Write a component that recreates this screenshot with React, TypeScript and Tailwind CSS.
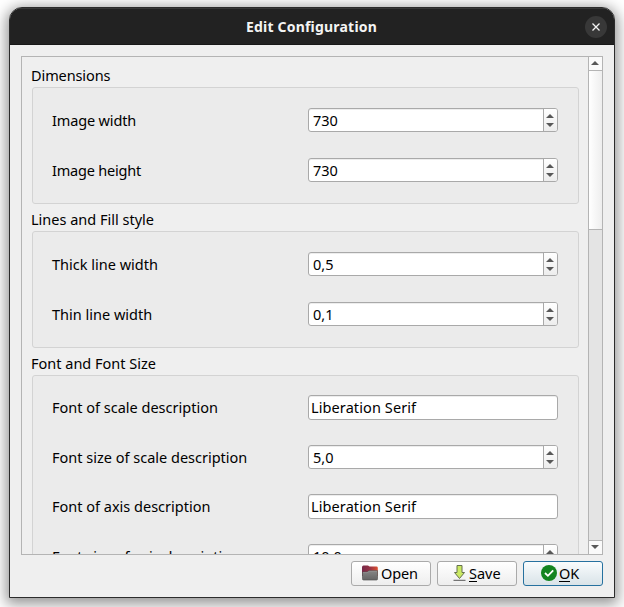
import type { ReactNode } from "react";

function Arrow({ down = false }: { down?: boolean }) {
  return (
    <svg width="8" height="4" viewBox="0 0 8 4" className={down ? "block rotate-180" : "block"}>
      <path d="M4 0 L8 4 H0 Z" fill="#585858" />
    </svg>
  );
}

function Spin({ value }: { value: string }) {
  return (
    <div className="flex h-6 w-[250px] overflow-hidden rounded-[3px] border border-[#a9a9a9] bg-white shadow-[inset_0_1px_0_#ededed]">
      <div className="flex h-[22px] flex-1 items-center pl-[4px]">{value}</div>
      <div className="flex w-[14px] flex-col items-center gap-[5px] border-l border-[#a9a9a9] bg-linear-to-b from-white to-[#ededed] pr-px pt-[5px]">
        <Arrow />
        <Arrow down />
      </div>
    </div>
  );
}

function Field({ value }: { value: string }) {
  return (
    <div className="flex h-[25px] w-[250px] items-center rounded-[3px] border border-[#a9a9a9] bg-white pb-px pl-[2px] tracking-[0.1px] shadow-[inset_0_1px_0_#ededed]">
      {value}
    </div>
  );
}

function Row({ label, children }: { label: ReactNode; children: ReactNode }) {
  return (
    <div className="flex items-center">
      <div className="w-[256px] whitespace-nowrap pb-px">{label}</div>
      {children}
    </div>
  );
}

function Group({ title, className, children }: { title: ReactNode; className: string; children: ReactNode }) {
  return (
    <section>
      <h2 className="flex h-[27px] items-center pl-[9px] pt-[3px]">{title}</h2>
      <div className={`ml-[10px] flex w-[547px] flex-col rounded-[3px] border border-[#d3d3d3] bg-[#ebebeb] pl-[19px] ${className}`}>
        {children}
      </div>
    </section>
  );
}

function FolderIcon() {
  return (
    <svg width="16" height="16" viewBox="0 0 16 16">
      <defs>
        <linearGradient id="folderBack" x1="0" x2="1">
          <stop offset="0" stopColor="#762949" />
          <stop offset=".5" stopColor="#963043" />
          <stop offset="1" stopColor="#dc5131" />
        </linearGradient>
        <linearGradient id="folderFront" x1="0" x2="0" y1="0" y2="1">
          <stop offset="0" stopColor="#858585" />
          <stop offset="1" stopColor="#666" />
        </linearGradient>
      </defs>
      <path d="M0 2.2Q0 .4 1.5.4H6L7.5 1.4H14.4Q15.8 1.4 15.8 2.8V11H0Z" fill="url(#folderBack)" />
      <path d="M.4 7.8Q.4 7 1.4 7H5L7 5.7H15.6V13.8Q15.6 15 14.4 15H1.6Q.4 15 .4 13.8Z" fill="url(#folderFront)" stroke="#555" strokeWidth=".7" />
      <path d="M1 7.6H5.3L7.2 6.3H15" fill="none" stroke="#a0a0a0" strokeWidth=".6" />
    </svg>
  );
}

function SaveIcon() {
  return (
    <svg width="13" height="16" viewBox="0 0 13 16">
      <path d="M4 .5H9V7.5H11.5L6.5 13.5 1.5 7.5H4Z" fill="#cbea63" stroke="#66704f" strokeWidth="1" />
      <path d="M.5 15.3H12.5" stroke="#555" strokeWidth="1" />
    </svg>
  );
}

function OkIcon() {
  return (
    <svg width="16" height="16" viewBox="0 0 16 16">
      <circle cx="8" cy="8" r="8" fill="#138420" />
      <path d="M4 8L6.9 10.8 12.2 5.3" fill="none" stroke="#fff" strokeWidth="1.8" />
    </svg>
  );
}

function Mnemonic({ letter, rest }: { letter: string; rest: string }) {
  return (
    <span className="flex">
      <span className="relative after:absolute after:inset-x-0 after:bottom-[1px] after:h-px after:bg-black">{letter}</span>
      {rest}
    </span>
  );
}

export default function App() {
  return (
    <div className="h-[607px] w-[624px] overflow-hidden bg-white pl-[9px] pt-[7px] font-['Noto_Sans',sans-serif] text-[14.5px] leading-5 text-black">
      <div className="flex h-[591px] w-[606px] flex-col overflow-hidden rounded-t-[13px] border border-[#2c2c2c] bg-[#efefef] shadow-[0_3px_14px_3px_rgba(0,0,0,0.42)]">
        <header className="flex h-[37px] shrink-0 items-center border-b border-[#181818] bg-[#222] pl-[28px] pr-[7px] shadow-[inset_0_1px_0_#383838]">
          <h1 className="flex-1 pt-[2px] text-center text-[14px] font-bold tracking-[0.2px] text-[#f4f4f4]">Edit Configuration</h1>
          <button className="mt-px flex size-[22px] items-center justify-center rounded-full bg-[#383838]">
            <svg width="8" height="8" viewBox="0 0 8 8">
              <path d="M.5.5L7.5 7.5M7.5.5L.5 7.5" stroke="#f4f4f4" strokeWidth="1.3" />
            </svg>
          </button>
        </header>

        <main className="ml-[11px] mt-[11px] flex h-[499px] w-[582px] shrink-0 border border-[#b4b4b4]">
          <div className="flex h-[497px] flex-1 flex-col overflow-hidden pt-[3px]">
            <Group title={<span className="tracking-[-0.1px]">Dimensions</span>} className="h-[117px] shrink-0 gap-[26px] pt-[20px]">
              <Row label={<span className="tracking-[-0.15px]">Image width</span>}><Spin value="730" /></Row>
              <Row label={<span className="tracking-[-0.2px]">Image height</span>}><Spin value="730" /></Row>
            </Group>
            <Group title="Lines and Fill style" className="h-[117px] shrink-0 gap-[26px] pt-[20px]">
              <Row label="Thick line width"><Spin value="0,5" /></Row>
              <Row label="Thin line width"><Spin value="0,1" /></Row>
            </Group>
            <Group title="Font and Font Size" className="h-[260px] gap-[25px] pt-[19px]">
              <Row label="Font of scale description"><Field value="Liberation Serif" /></Row>
              <Row label="Font size of scale description"><Spin value="5,0" /></Row>
              <Row label="Font of axis description"><Field value="Liberation Serif" /></Row>
              <Row label="Font size of axis description"><Spin value="10,0" /></Row>
            </Group>
          </div>
          <div className="flex w-[14px] flex-col border-l border-[#b4b4b4] bg-[#e4e4e4]">
            <div className="flex h-[14px] items-center justify-center border-b border-[#b4b4b4] bg-[#fafafa] pb-px pr-px"><Arrow /></div>
            <div className="h-[159px] border-b border-[#b4b4b4] bg-linear-to-r from-white to-[#eee]" />
            <div className="flex-1" />
            <div className="flex h-[14px] items-center justify-center border-t border-[#b4b4b4] bg-[#fafafa] pb-px pr-px"><Arrow down /></div>
          </div>
        </main>

        <footer className="mr-[11px] mt-[6px] flex justify-end gap-[6px]">
          <button className="flex h-[25px] w-20 items-center gap-[3px] rounded-[3px] border border-[#aaa] bg-linear-to-b from-white to-[#eee] pb-px pl-[10px] tracking-[-0.15px]">
            <FolderIcon />Open
          </button>
          <button className="flex h-[25px] w-20 items-center gap-[3px] rounded-[3px] border border-[#aaa] bg-linear-to-b from-white to-[#eee] pb-px pl-[15px]">
            <SaveIcon /><Mnemonic letter="S" rest="ave" />
          </button>
          <button className="flex h-[25px] w-20 items-center gap-[2px] rounded-[3px] border border-[#26719f] bg-linear-to-b from-[#f9fcfd] to-[#d9e3e8] pb-px pl-[17px]">
            <OkIcon /><Mnemonic letter="O" rest="K" />
          </button>
        </footer>
      </div>
    </div>
  );
}
